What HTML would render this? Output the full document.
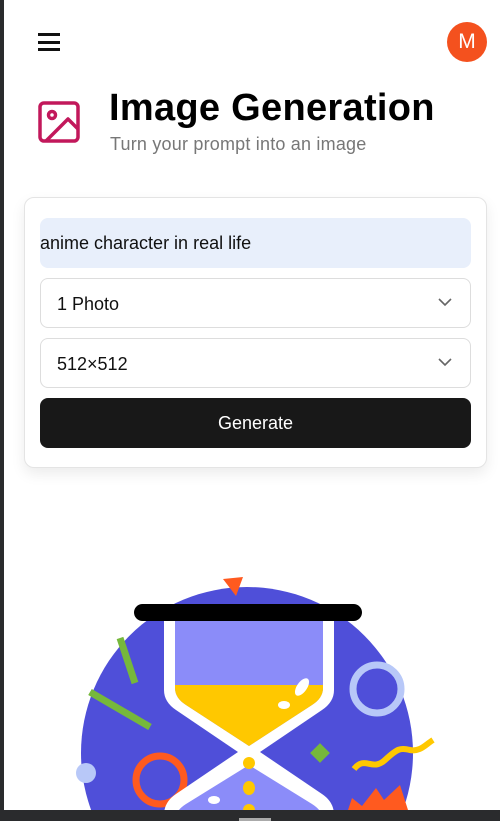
<!DOCTYPE html>
<html><head><style>
*{margin:0;padding:0;box-sizing:border-box}
html,body{width:500px;height:821px;overflow:hidden}
body{background:#fff;font-family:"Liberation Sans",Arial,sans-serif;position:relative}
.ls{position:absolute;left:0;top:0;width:4px;height:821px;background:#2a2b2d}
.bb{position:absolute;left:0;top:810px;width:500px;height:11px;background:#2a2b2d}
.bb i{position:absolute;left:239px;top:8px;width:32px;height:3px;background:#aaa}
.ham{position:absolute;left:38px;width:22px;height:2.5px;background:#111}
.av{position:absolute;left:447px;top:22px;width:40px;height:40px;border-radius:50%;background:#f4511e;color:#fff;font-size:21px;text-align:center;line-height:40px}
h1{position:absolute;left:109px;top:87px;font-size:38px;font-weight:bold;color:#000;letter-spacing:0.3px;white-space:nowrap}
.sub{position:absolute;left:110px;top:134px;font-size:18px;color:#777;letter-spacing:0.2px}
.card{position:absolute;left:24px;top:197px;width:463px;height:271px;border:1px solid #e4e4e4;border-radius:10px;box-shadow:0 6px 14px rgba(0,0,0,.08);background:#fff}
.f{position:absolute;left:40px;width:431px;height:50px;border-radius:8px;font-size:18px;color:#111;line-height:50px;white-space:nowrap}
.sel{border:1px solid #ddd;padding-left:16px}
.sel svg{position:absolute;right:18px;top:19px}
</style></head><body>
<div class="ls"></div>
<div class="ham" style="top:33px"></div><div class="ham" style="top:41px"></div><div class="ham" style="top:48px"></div>
<div class="av">M</div>
<svg style="position:absolute;left:38px;top:101px" width="42" height="42" viewBox="0 0 42 42" fill="none" stroke="#c2185b" stroke-width="3.5" stroke-linejoin="round"><rect x="2" y="2" width="38" height="38" rx="4"/><circle cx="14" cy="14" r="3.5"/><path d="M8 40 L30 18 L40 28"/></svg>
<h1>Image Generation</h1>
<div class="sub">Turn your prompt into an image</div>
<div class="card"></div>
<div class="f" style="top:218px;background:#e8effb">anime character in real life</div>
<div class="f sel" style="top:278px">1 Photo<svg width="14" height="9" viewBox="0 0 14 9"><path d="M1 1l6 6 6-6" stroke="#666" stroke-width="1.6" fill="none"/></svg></div>
<div class="f sel" style="top:338px">512×512<svg width="14" height="9" viewBox="0 0 14 9"><path d="M1 1l6 6 6-6" stroke="#666" stroke-width="1.6" fill="none"/></svg></div>
<div class="f" style="top:398px;background:#181818;color:#fff;text-align:center">Generate</div>
<svg style="position:absolute;left:0;top:560px" width="500" height="250" viewBox="0 560 500 250">
<circle cx="247" cy="753" r="166" fill="#4f4fd9"/>
<polygon points="223,579 243,577 236,596" fill="#ff5a1f"/>
<line x1="120" y1="638" x2="135" y2="683" stroke="#76b83b" stroke-width="7"/>
<line x1="90" y1="692" x2="150" y2="727" stroke="#76b83b" stroke-width="7"/>
<circle cx="377" cy="689" r="24" fill="none" stroke="#b8c8f8" stroke-width="7"/>
<circle cx="86" cy="773" r="10" fill="#b8c8f8"/>
<circle cx="160" cy="780" r="24" fill="none" stroke="#ff5a1f" stroke-width="7"/>
<rect x="313" y="746" width="14" height="14" fill="#76b83b" transform="rotate(45 320 753)"/>
<path d="M354 769 C365 755,372 772,385 760 S400 748,410 750 S425 745,433 740" stroke="#ffc800" stroke-width="6" fill="none"/>
<polygon points="348,810 352,798 362,806 376,788 384,800 400,785 408,810" fill="#ff5a1f"/>
<path d="M164 621 V690 Q164 702 176 710 L238 752 L176 794 Q164 802 164 815 V830 H334 V815 Q334 802 322 794 L260 752 L322 710 Q334 702 334 690 V621 Z" fill="#fff"/>
<path d="M175 621 V688 Q175 698 186 705 L249 746 L312 705 Q323 698 323 688 V621 Z" fill="#8b8cf9"/>
<path d="M175 685 V688 Q175 698 186 705 L249 746 L312 705 Q323 698 323 688 V685 Z" fill="#ffc800"/>
<path d="M249 765 L312 804 Q323 811 323 820 V830 H175 V820 Q175 811 186 804 Z" fill="#8b8cf9"/>
<ellipse cx="302" cy="687" rx="5" ry="10" transform="rotate(35 302 687)" fill="#fff"/>
<ellipse cx="284" cy="705" rx="6" ry="4" fill="#fff"/>
<ellipse cx="214" cy="800" rx="6" ry="4" fill="#fff"/>
<circle cx="249" cy="763" r="6" fill="#ffc800"/>
<ellipse cx="249" cy="788" rx="6" ry="7" fill="#ffc800"/>
<circle cx="249" cy="810" r="6" fill="#ffc800"/>
<rect x="134" y="604" width="228" height="17" rx="8.5" fill="#000"/>
</svg>
<div class="bb"><i></i></div>
</body></html>
